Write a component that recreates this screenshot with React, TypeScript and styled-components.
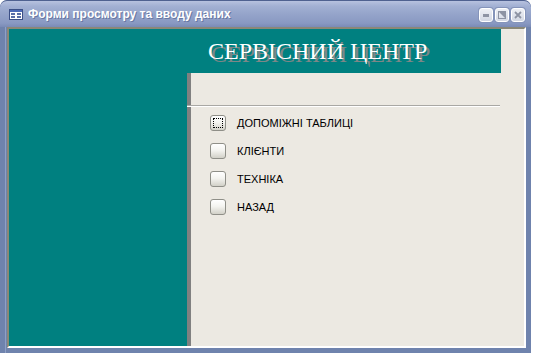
import * as React from "react";
import styled, { createGlobalStyle } from "styled-components";

const GlobalStyle = createGlobalStyle`
  html, body {
    margin: 0;
    padding: 0;
    background: #ffffff;
  }
  body {
    font-family: "Liberation Sans", Arial, sans-serif;
  }
`;

const Window = styled.div`
  width: 531px;
  height: 353px;
  display: flex;
  flex-direction: column;
  background: #6f83ad;
  border-radius: 7px 7px 0 0;
  box-sizing: border-box;
  overflow: hidden;
`;

const TitleBar = styled.div`
  height: 27px;
  flex: none;
  display: flex;
  align-items: center;
  padding: 0 6px 0 9px;
  box-sizing: border-box;
  border-radius: 7px 7px 0 0;
  border-top: 1px solid #4f6190;
  background: linear-gradient(
    to bottom,
    #b7c2df 0%,
    #a2b0d3 20%,
    #95a4ca 50%,
    #8999c2 85%,
    #7a8bb6 100%
  );
`;

const TitleIcon = styled.svg`
  width: 14px;
  height: 11px;
  flex: none;
  margin-top: 1px;
`;

const TitleText = styled.div`
  margin-left: 5px;
  flex: 1;
  color: #ffffff;
  font-family: "Liberation Sans", Arial, sans-serif;
  font-weight: bold;
  font-size: 12px;
  text-shadow: 1px 1px 0 #6878a3;
  white-space: nowrap;
`;

const CaptionButtons = styled.div`
  display: flex;
  gap: 2px;
  margin-top: 2px;
`;

const CaptionButton = styled.div`
  width: 14px;
  height: 14px;
  box-sizing: border-box;
  border: 1px solid #ffffff;
  border-radius: 3px;
  background: linear-gradient(to bottom, #eef0f5, #d3d8e4);
  box-shadow: 0 0 0 1px #8594ba;
  display: flex;
  align-items: center;
  justify-content: center;
`;

const Frame = styled.div`
  flex: 1;
  display: flex;
  padding: 0 5px 5px 7px;
  box-shadow: inset 5px 0 0 #6f83ad, inset 6px 0 0 #8fa0c6;
  min-height: 0;
`;

const Client = styled.div`
  flex: 1;
  display: flex;
  flex-direction: column;
  background: #ece9e2;
  border-top: 2px solid #8a8878;
  border-left: 2px solid #8a8878;
  border-right: 2px solid #ffffff;
  border-bottom: 2px solid #ffffff;
  min-height: 0;
`;

const HeaderRow = styled.div`
  height: 44px;
  flex: none;
  display: flex;
`;

const HeaderBand = styled.div`
  width: 492px;
  background: #008080;
  display: flex;
  align-items: center;
  padding-left: 199px;
  box-sizing: border-box;
`;

const HeaderTitle = styled.h1`
  margin: 0;
  margin-top: 1px;
  font-family: "Liberation Serif", "Times New Roman", serif;
  font-weight: normal;
  font-size: 24px;
  color: #ffffff;
  text-shadow: 3px 3px 0 #7d8787;
  white-space: nowrap;
`;

const Body = styled.div`
  flex: 1;
  display: flex;
  min-height: 0;
`;

const SidePanel = styled.div`
  width: 178px;
  flex: none;
  background: #008080;
`;

const Main = styled.div`
  flex: 1;
  display: flex;
  flex-direction: column;
`;

const TopGap = styled.div`
  height: 32px;
  border-left: 4px solid #808080;
`;

const Divider = styled.div`
  width: 313px;
  border-top: 1px solid #a9a8a4;
  border-bottom: 1px solid #ffffff;
`;

const Menu = styled.div`
  flex: 1;
  border-left: 4px solid #808080;
  padding: 8px 0 0 19px;
  display: flex;
  flex-direction: column;
`;

const MenuRow = styled.div`
  height: 28px;
  display: flex;
  align-items: flex-start;
  gap: 11px;
`;

const ToggleButton = styled.div<{ focused?: boolean }>`
  width: 16px;
  height: 16px;
  flex: none;
  box-sizing: border-box;
  border: 1px solid #8f8f88;
  border-radius: 3px;
  background: linear-gradient(to bottom, #ffffff 0%, #f4f4f0 45%, #d2d1c8 100%);
  position: relative;
  &::after {
    content: "";
    display: ${(p) => (p.focused ? "block" : "none")};
    position: absolute;
    left: 2px;
    top: 2px;
    right: 2px;
    bottom: 2px;
    border: 1px dotted #000000;
  }
`;

const MenuLabel = styled.span`
  font-family: "Liberation Sans", Arial, sans-serif;
  font-size: 11px;
  color: #000000;
  line-height: 15px;
  margin-top: 1px;
`;

const items = ["ДОПОМІЖНІ ТАБЛИЦІ", "КЛІЄНТИ", "ТЕХНІКА", "НАЗАД"];

export default function App() {
  return (
    <>
      <GlobalStyle />
      <Window>
        <TitleBar>
          <TitleIcon viewBox="0 0 14 11">
            <rect x="0.5" y="0.5" width="13" height="10" fill="#ffffff" stroke="#3b4f86" />
            <rect x="1" y="1" width="12" height="2" fill="#4d6bb8" />
            <rect x="2" y="4" width="4" height="2" fill="#5a6fa8" />
            <rect x="8" y="4" width="4" height="2" fill="#5a6fa8" />
            <rect x="2" y="7" width="4" height="2" fill="#5a6fa8" />
            <rect x="8" y="7" width="4" height="2" fill="#5a6fa8" />
          </TitleIcon>
          <TitleText>Форми просмотру та вводу даних</TitleText>
          <CaptionButtons>
            <CaptionButton>
              <svg width="8" height="8" viewBox="0 0 8 8">
                <rect x="1" y="3" width="6" height="3" fill="#8d93a3" />
              </svg>
            </CaptionButton>
            <CaptionButton>
              <svg width="8" height="8" viewBox="0 0 8 8">
                <rect x="0.5" y="0.5" width="7" height="7" fill="none" stroke="#8d93a3" />
                <path d="M1 1 L7 1 L7 7 Z" fill="#8d93a3" />
              </svg>
            </CaptionButton>
            <CaptionButton>
              <svg width="8" height="8" viewBox="0 0 8 8">
                <path d="M1 1 L7 7 M7 1 L1 7" stroke="#8d93a3" strokeWidth="1.8" />
              </svg>
            </CaptionButton>
          </CaptionButtons>
        </TitleBar>
        <Frame>
          <Client>
            <HeaderRow>
              <HeaderBand>
                <HeaderTitle>СЕРВІСНИЙ ЦЕНТР</HeaderTitle>
              </HeaderBand>
            </HeaderRow>
            <Body>
              <SidePanel />
              <Main>
                <TopGap />
                <Divider />
                <Menu>
                  {items.map((label, i) => (
                    <MenuRow key={label}>
                      <ToggleButton focused={i === 0} />
                      <MenuLabel>{label}</MenuLabel>
                    </MenuRow>
                  ))}
                </Menu>
              </Main>
            </Body>
          </Client>
        </Frame>
      </Window>
    </>
  );
}
